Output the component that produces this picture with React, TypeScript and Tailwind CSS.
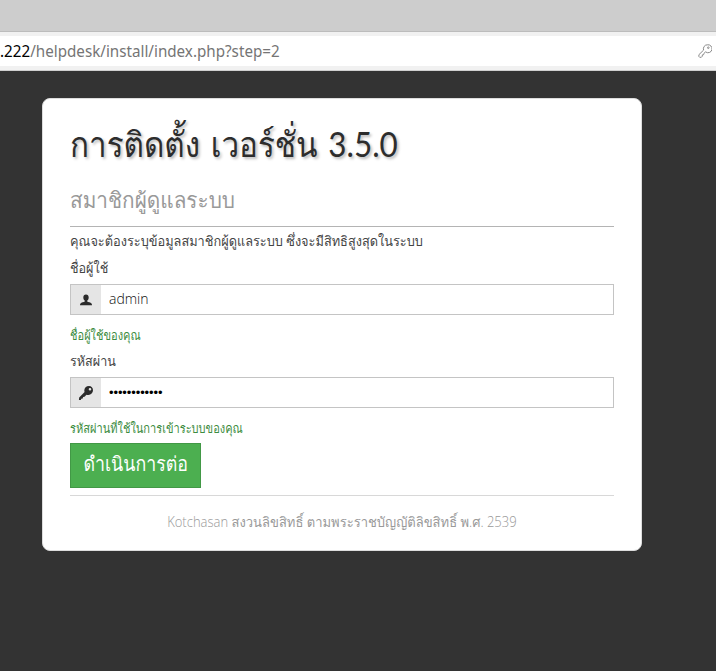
import React from "react";

type FieldProps = {
  label: string;
  hint: string;
  type: string;
  value: string;
  inputClass: string;
  icon: React.ReactNode;
};

function UserIcon() {
  return (
    <svg viewBox="0 0 12 12" className="w-3 h-3 fill-[#2b2b2b]">
      <path d="M6 .5C4.300.5 3.300 1.700 3.300 3.400c0 1.500.7 2.600 1.500 3.200v1C3.900 8.100 1.200 8.700.5 9.500.1 10 0 10.500 0 11.300h12c0-.8-.1-1.300-.5-1.800C10.800 8.700 8.100 8.100 7.200 7.600v-1C8 6 8.700 4.900 8.700 3.400 8.700 1.700 7.700.5 6 .5z" />
    </svg>
  );
}

function KeyIcon() {
  return (
    <svg viewBox="0 0 16 16" className="w-4 h-4">
      <path
        fillRule="evenodd"
        className="fill-[#2b2b2b]"
        d="M11 1C8.200 1 6.300 2.900 6.300 5.400c0 .6.1 1 .3 1.500L1.200 12.600.9 15h1.900l.5-1.300 1.400-.3.4-1.400 1.400-.3 2-2c.6.3 1.200.4 1.900.3C13 9.800 15 7.800 15 5.200 15 2.700 13.300 1 11 1zm1 1.900a1.300 1.300 0 1 1 0 2.600 1.300 1.300 0 0 1 0-2.600z"
      />
    </svg>
  );
}

function OutlineKeyIcon() {
  return (
    <svg viewBox="0 0 14 14" className="w-3.5 h-3.5 fill-none stroke-[#8a8a8a]">
      <path d="M9.300.8a4 4 0 0 0-3.700 5.300L.9 10.700v1.800l.8.800h1.600l1-1.100v-1.300l1.300-.2.300-1.300 1.700-1.500A4 4 0 1 0 9.300.8z" />
      <circle cx="10.300" cy="3.700" r=".8" />
    </svg>
  );
}

function Field({ label, hint, type, value, inputClass, icon }: FieldProps) {
  return (
    <div className="h-[93px]">
      <label className="block h-[30px] w-fit origin-left scale-x-[0.9] text-[14px] leading-[28px] text-[#444]">
        {label}
      </label>
      <div className="flex h-[31px] border border-[#c4c4c4]">
        <span className="flex w-[30px] items-center justify-center bg-[#e5e5e5]">
          {icon}
        </span>
        <input
          type={type}
          defaultValue={value}
          className={`min-w-0 flex-1 px-2 outline-none ${inputClass}`}
        />
      </div>
      <p className="h-8 w-fit origin-left scale-x-[0.85] pt-[7px] text-[13px] leading-[26px] text-[#3c8c40]">
        {hint}
      </p>
    </div>
  );
}

export default function App() {
  return (
    <div className="h-[671px] overflow-hidden bg-[#333] font-['Open_Sans',Loma,'Noto_Sans',sans-serif] font-light">
      <header>
        <div className="h-8 border-b border-[#bcbcbc] bg-[#cdcdcd]" />
        <div className="h-[39px] border-b border-[#d0d0d0] bg-[#f1f1f1] pt-1">
          <div className="flex h-[30px] items-center justify-between bg-white pr-1 font-['Noto_Sans',sans-serif] text-[16px] font-normal">
            <p className="origin-left scale-x-[0.949] text-[#757575]">
              <span className="text-black">.222</span>
              /helpdesk/install/index.php?step=2
            </p>
            <OutlineKeyIcon />
          </div>
        </div>
      </header>
      <main className="mt-[27px] ml-[42px] h-[453px] w-[600px] rounded-lg border border-[#ddd] bg-white px-[27px]">
        <h1 className="h-[83px] w-fit origin-left scale-x-[0.897] font-[Lato,Loma,sans-serif] text-[35px] leading-[88px] font-normal whitespace-nowrap text-[#2d2d2d] [word-spacing:3px] [text-shadow:2px_2px_3px_#bbb]">
          การติดตั้ง เวอร์ชั่น 3.5.0
        </h1>
        <h2 className="h-[45px] border-b border-[#b4b4b4] text-[22px] leading-[34px] text-[#999]">
          <span className="inline-block origin-left scale-x-[0.943]">
            สมาชิกผู้ดูแลระบบ
          </span>
        </h2>
        <p className="h-[27px] w-fit origin-left scale-x-[0.912] text-[14px] leading-[28px] whitespace-nowrap text-[#444]">
          คุณจะต้องระบุข้อมูลสมาชิกผู้ดูแลระบบ ซึ่งจะมีสิทธิสูงสุดในระบบ
        </p>
        <Field
          label="ชื่อผู้ใช้"
          hint="ชื่อผู้ใช้ของคุณ"
          type="text"
          value="admin"
          inputClass="pb-0.5 text-[14px] text-[#111]"
          icon={<UserIcon />}
        />
        <Field
          label="รหัสผ่าน"
          hint="รหัสผ่านที่ใช้ในการเข้าระบบของคุณ"
          type="password"
          value="kotchasan350"
          inputClass="font-['Liberation_Sans',sans-serif] text-[13px] font-normal tracking-[-0.1px] text-black"
          icon={<KeyIcon />}
        />
        <button className="mt-[3px] block h-[45px] w-[131px] border border-[#429846] bg-[#4caf50] pb-1 text-[20px] whitespace-nowrap text-white">
          <span className="-mx-2 inline-block scale-x-[0.89]">ดำเนินการต่อ</span>
        </button>
        <footer className="mt-[7px] border-t border-[#d8d8d8] text-center text-[14px] leading-[52px] whitespace-nowrap text-[#999]">
          <span className="inline-block scale-x-[0.93]">
            Kotchasan สงวนลิขสิทธิ์ ตามพระราชบัญญัติลิขสิทธิ์ พ.ศ. 2539
          </span>
        </footer>
      </main>
    </div>
  );
}
